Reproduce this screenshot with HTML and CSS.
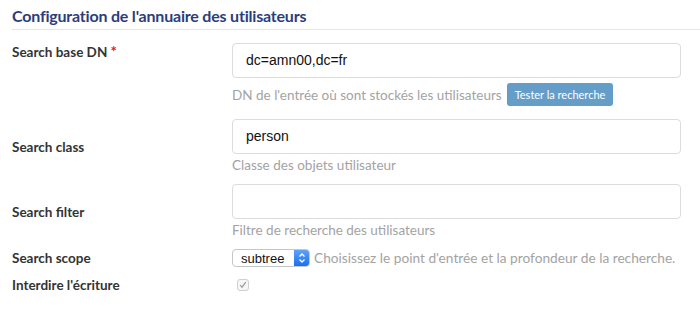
FILE: index.html
```html
<!DOCTYPE html>
<html lang="fr">
<head>
    <meta charset="UTF-8">
    <title>Configuration de l'annuaire</title>
    <link rel="stylesheet" href="styles.css">
</head>
<body>
    <div class="panel">
        <h2 class="panel-title">Configuration de l'annuaire des utilisateurs</h2>
        <form class="form">
            <div class="form-row form-row--top">
                <label class="form-label">Search base DN <span class="required">*</span></label>
                <div class="form-field">
                    <div class="text-input">dc=amn00,dc=fr</div>
                    <div class="help help--action">
                        DN de l'entrée où sont stockés les utilisateurs
                        <button type="button" class="btn">Tester la recherche</button>
                    </div>
                </div>
            </div>
            <div class="form-row">
                <label class="form-label">Search class</label>
                <div class="form-field">
                    <div class="text-input">person</div>
                    <div class="help">Classe des objets utilisateur</div>
                </div>
            </div>
            <div class="form-row">
                <label class="form-label">Search filter</label>
                <div class="form-field">
                    <div class="text-input"></div>
                    <div class="help">Filtre de recherche des utilisateurs</div>
                </div>
            </div>
            <div class="form-row">
                <label class="form-label">Search scope</label>
                <div class="form-field form-field--inline">
                    <div class="select">
                        <span class="select-value">subtree</span>
                        <span class="select-arrows">
                            <svg width="8" height="12" viewBox="0 0 8 12">
                                <path d="M1.5 4.5 L4 2 L6.5 4.5 M1.5 7.5 L4 10 L6.5 7.5" fill="none" stroke="#fff" stroke-width="1.3"/>
                            </svg>
                        </span>
                    </div>
                    <span class="help help--inline">Choisissez le point d'entrée et la profondeur de la recherche.</span>
                </div>
            </div>
            <div class="form-row">
                <label class="form-label">Interdire l'écriture</label>
                <div class="form-field">
                    <span class="checkbox">
                        <svg width="8" height="8" viewBox="0 0 8 8">
                            <path d="M1.2 4.2 L3 6.2 L6.8 1.2" fill="none" stroke="#9a9a9a" stroke-width="1.2"/>
                        </svg>
                    </span>
                </div>
            </div>
        </form>
    </div>
</body>
</html>
```

FILE: styles.css
```css
* { box-sizing: border-box; margin: 0; padding: 0; }
body {
    background: #fff;
    font-family: 'Lato', 'Liberation Sans', Arial, sans-serif;
    color: #333;
}
.panel {
    padding: 6px 0 0 12px;
}
.panel-title {
    font-size: 16px;
    font-weight: 700;
    letter-spacing: -0.2px;
    color: #2c3d7c;
    line-height: 20px;
    padding-bottom: 3px;
    border-bottom: 1px solid #e5e5e5;
}
.form {
    padding: 13px 19px 0 0;
}
.form-row {
    display: flex;
    align-items: center;
    margin-bottom: 10px;
}
.form-row--top {
    align-items: flex-start;
    margin-bottom: 13px;
}
.form-label {
    width: 220px;
    flex-shrink: 0;
    font-size: 13.5px;
    font-weight: 700;
    color: #333;
    line-height: 16px;
}
.required {
    color: #e8141a;
    font-size: 15px;
}
.form-field { flex: 1; }
.form-field--inline {
    display: flex;
    align-items: center;
    gap: 4px;
}
.text-input {
    height: 35px;
    border: 1px solid #dcdcdc;
    border-radius: 4px;
    padding: 0 13px;
    font-family: 'Liberation Sans', Arial, sans-serif;
    font-size: 14px;
    line-height: 33px;
    color: #111;
}
.help {
    font-size: 13.5px;
    color: #a3a3a3;
    line-height: 18px;
    margin-top: 2px;
}
.help--action {
    display: flex;
    align-items: center;
    gap: 5px;
    margin-top: 5px;
}
.help--inline { margin-top: 0; font-size: 13.7px; }
.btn {
    background: #659dc9;
    color: #fff;
    border: none;
    border-radius: 3px;
    font-family: 'Lato', Arial, sans-serif;
    font-size: 11px;
    height: 23px;
    padding: 0 8px;
}
.select {
    width: 78px;
    height: 18px;
    border: 1px solid #c6c6c6;
    border-radius: 4px;
    display: flex;
    align-items: center;
    overflow: hidden;
    background: #fff;
}
.select-value {
    flex: 1;
    padding-left: 8px;
    font-family: 'Liberation Sans', Arial, sans-serif;
    font-size: 13px;
    color: #111;
}
.select-arrows {
    width: 15px;
    height: 100%;
    background: linear-gradient(#5ea3f7, #1b6ff0);
    display: flex;
    align-items: center;
    justify-content: center;
}
.checkbox {
    display: flex;
    align-items: center;
    justify-content: center;
    width: 12px;
    height: 12px;
    margin-left: 5px;
    border: 1px solid #cfcfcf;
    border-radius: 3px;
    background: #f6f6f6;
}
```
